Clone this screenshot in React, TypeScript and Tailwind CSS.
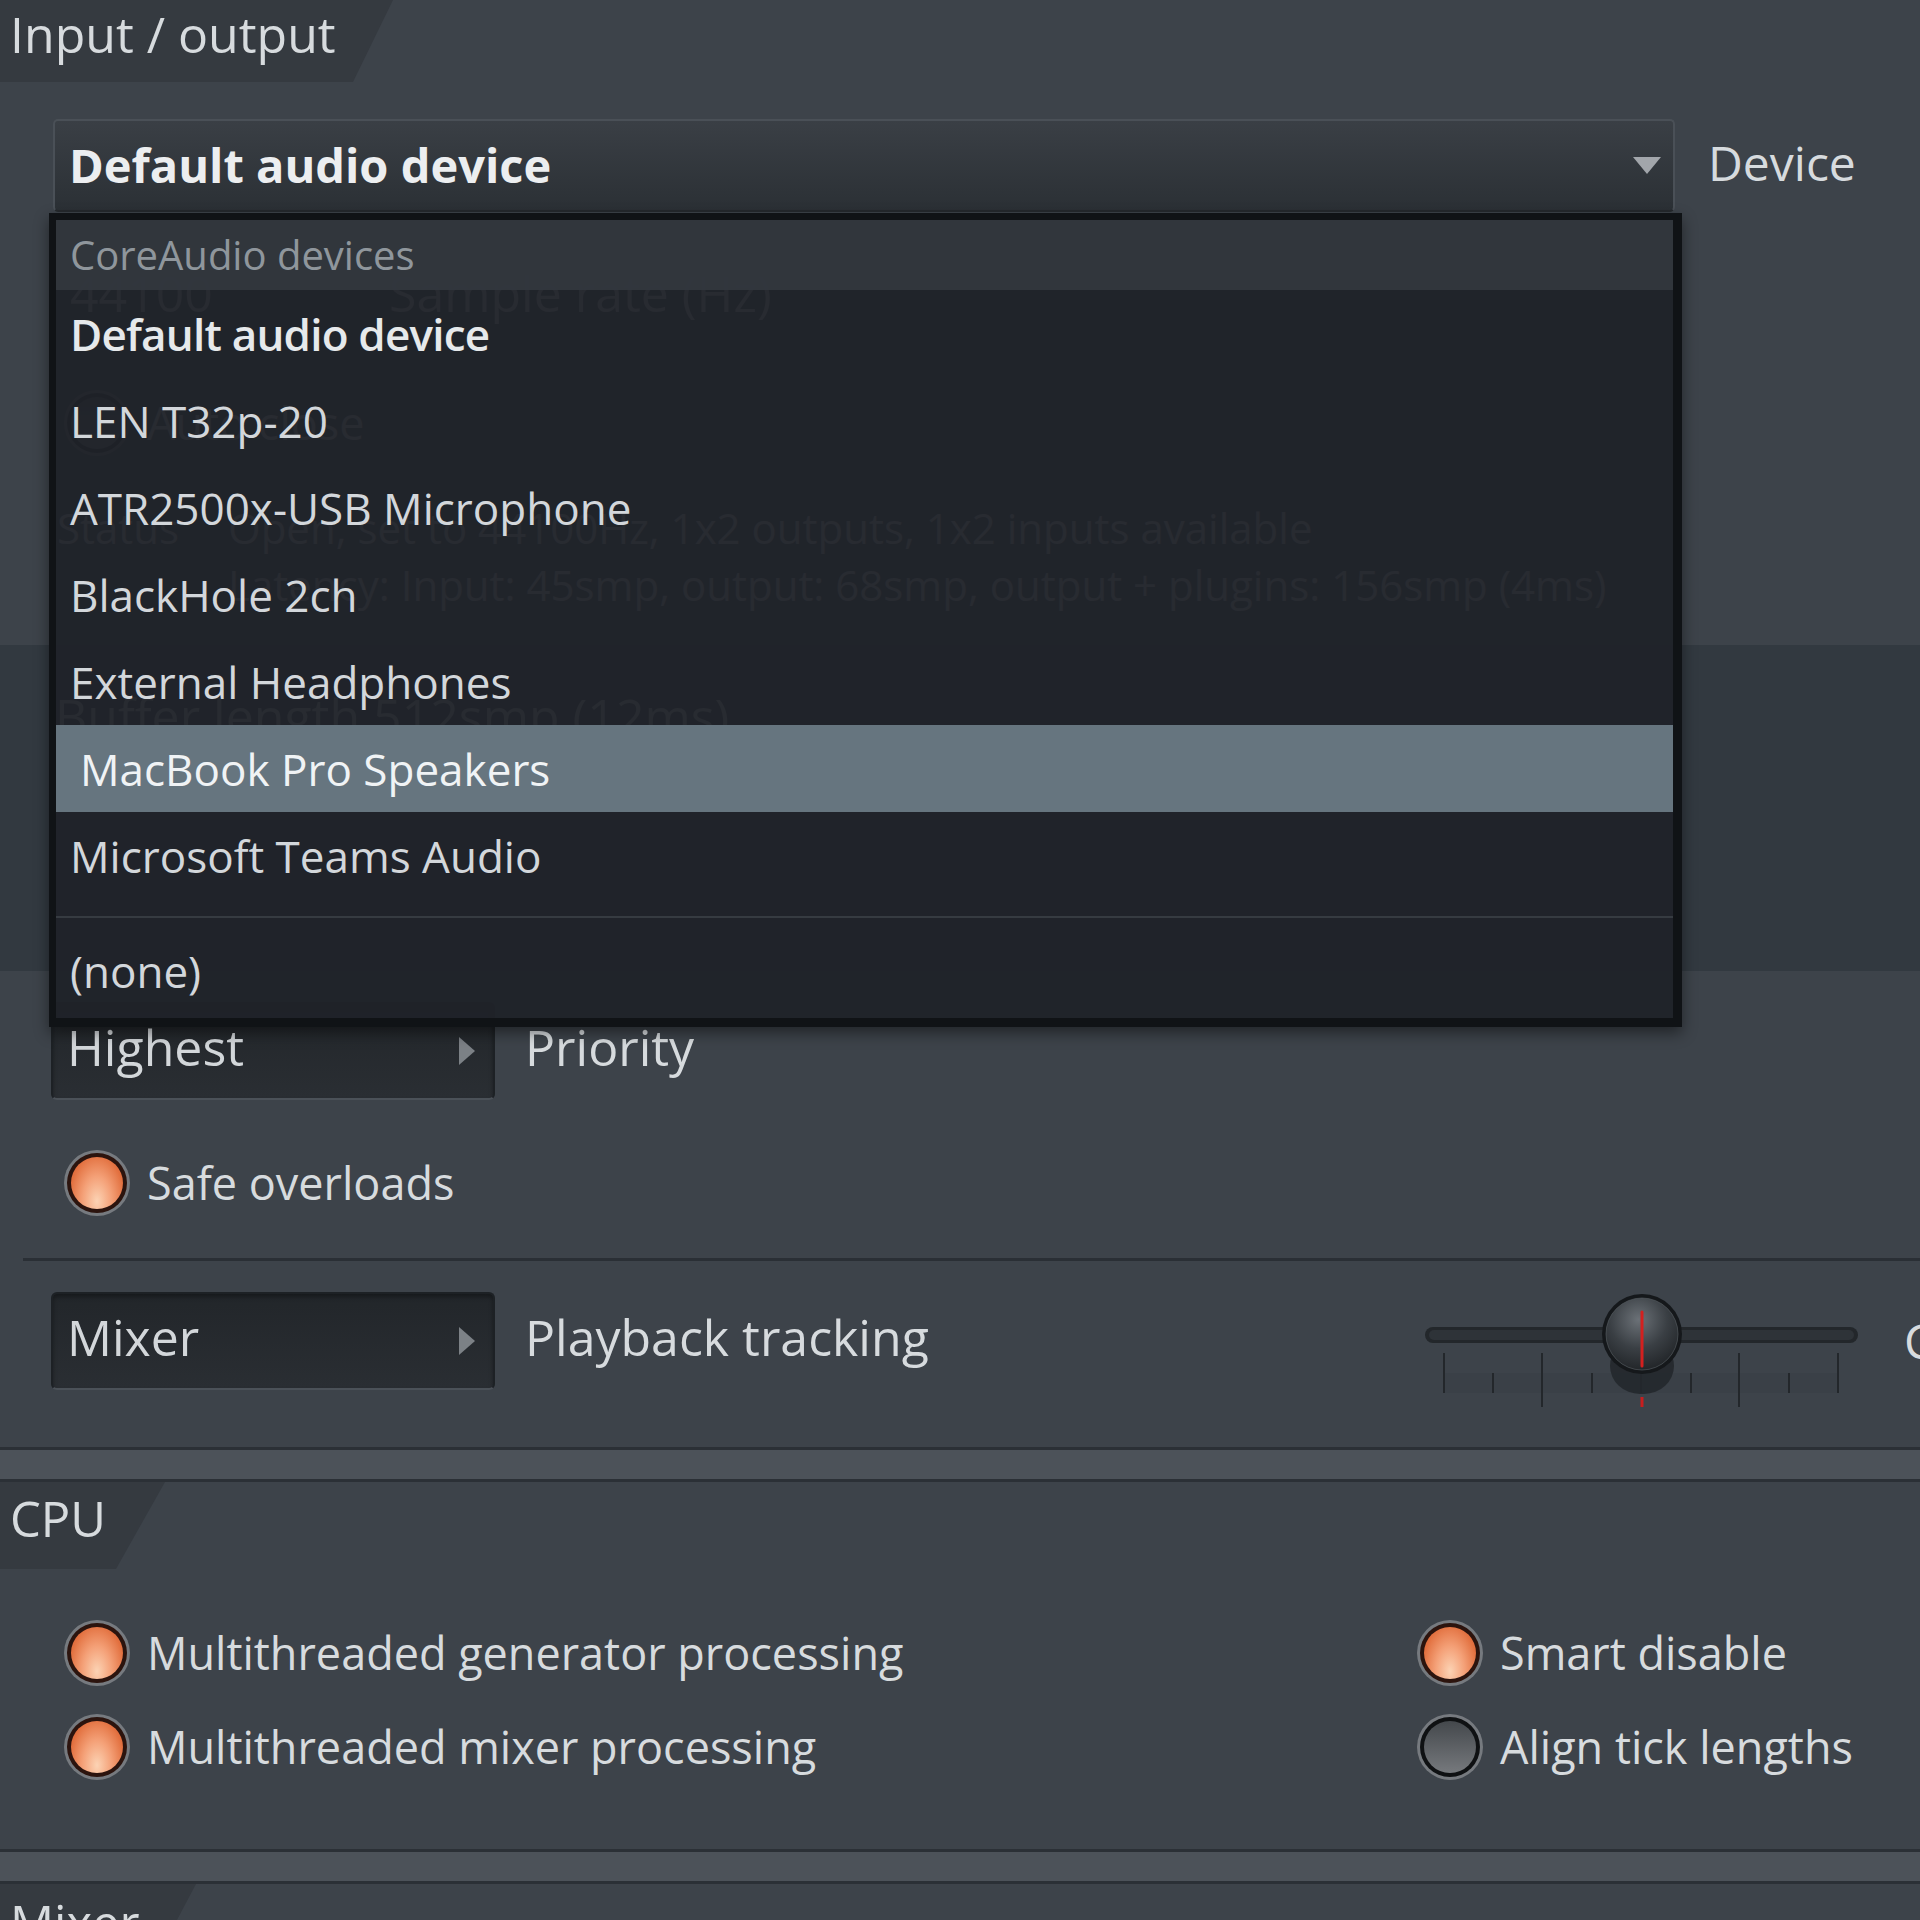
import React from "react";

type LedProps = { on: boolean };

// Round status lamp used for the toggle options
function Led({ on }: LedProps) {
  return (
    <span className="flex h-[66px] w-[66px] shrink-0 rounded-full bg-[#767a7f] p-[3px]">
      {on ? (
        <span className="flex h-full w-full rounded-full bg-[#2c140e] p-[4px]">
          <span className="h-full w-full rounded-full bg-[radial-gradient(ellipse_at_50%_85%,#fcd3b4_0%,#f4a077_40%,#e2703f_75%,#cf5a2f_100%)]" />
        </span>
      ) : (
        <span className="flex h-full w-full rounded-full bg-[#0f1113] p-[4px]">
          <span className="h-full w-full rounded-full bg-[linear-gradient(to_bottom,#44484c,#76797d)]" />
        </span>
      )}
    </span>
  );
}

function Toggle({ on, label }: { on: boolean; label: string }) {
  return (
    <div className="flex h-[68px] items-center gap-[17px]">
      <Led on={on} />
      <span className="whitespace-nowrap text-[45px]">{label}</span>
    </div>
  );
}

// Small stepper box with a right-pointing arrow
function Stepper({ label }: { label: string }) {
  return (
    <div className="flex h-[98px] w-[444px] shrink-0 items-center justify-between rounded-[6px] border-2 border-[#1d2125] border-b-[#4b5158] bg-[linear-gradient(to_bottom,#22262a,#2a2e33)] pl-[14px] pr-[18px] shadow-[inset_0_3px_4px_rgba(0,0,0,0.35)]">
      <span className="pb-[8px] text-[50px] text-[#d3d7da]">{label}</span>
      <svg width="16" height="28" viewBox="0 0 16 28">
        <path d="M0 0 L16 14 L0 28 Z" fill="#7c8186" />
      </svg>
    </div>
  );
}

function Divider() {
  return (
    <div>
      <div className="h-[3px] bg-[#2b3036]" />
      <div className="h-[29px] bg-[#4c5259]" />
      <div className="h-[3px] bg-[#2b3036]" />
    </div>
  );
}

// Horizontal tracking slider with knob and scale ticks
function TrackSlider() {
  const majors = [19, 117, 216, 314, 413];
  const minors = [68, 167, 266, 364];
  return (
    <svg width="440" height="120" viewBox="0 0 440 120" className="shrink-0 self-start">
      <defs>
        <radialGradient id="knobFace" cx="0.45" cy="0.3" r="0.8">
          <stop offset="0" stopColor="#6b7177" />
          <stop offset="0.5" stopColor="#3a3f44" />
          <stop offset="1" stopColor="#1b1e21" />
        </radialGradient>
      </defs>
      <rect x="0" y="35" width="433" height="16" rx="8" fill="#23272b" />
      <rect x="4" y="38" width="425" height="10" rx="5" fill="#2e3338" />
      <rect x="19" y="81" width="394" height="20" fill="#383e44" opacity="0.45" />
      {majors.map((x) => (
        <line
          key={"M" + x}
          x1={x}
          y1={61}
          x2={x}
          y2={x === 117 || x === 314 ? 115 : 101}
          stroke="#23272b"
          strokeWidth="2"
        />
      ))}
      {minors.map((x) => (
        <line key={"m" + x} x1={x} y1={81} x2={x} y2={101} stroke="#23272b" strokeWidth="2" />
      ))}
      <rect x="185" y="46" width="64" height="56" rx="30" fill="#24282c" opacity="0.9" />
      <circle cx="217" cy="42" r="40" fill="#15181b" />
      <circle cx="217" cy="42" r="36" fill="url(#knobFace)" />
      <circle cx="217" cy="42" r="36" fill="none" stroke="#5a6066" strokeWidth="1" opacity="0.6" />
      <line x1="217" y1="20" x2="217" y2="74" stroke="#d3201f" strokeWidth="3" strokeLinecap="round" />
      <line x1="217" y1="105" x2="217" y2="115" stroke="#c81e1e" strokeWidth="3" />
    </svg>
  );
}

const devices = [
  "LEN T32p-20",
  "ATR2500x-USB Microphone",
  "BlackHole 2ch",
  "External Headphones",
];

// Open device list shown over the panel
function DeviceMenu() {
  return (
    <div className="absolute left-[49px] top-[213px] w-[1633px] border-[7px] border-r-[9px] border-b-[9px] border-[#101316] bg-[#1f2329]/[0.955] shadow-[0_6px_14px_rgba(0,0,0,0.45)]">
      <div className="flex h-[70px] items-center bg-[#32373d]/[0.96] pl-[14px] text-[40px] text-[#8f969c]">
        CoreAudio devices
      </div>
      <div className="flex h-[87px] items-center pl-[14px] text-[44px] font-semibold tracking-[-0.8px] text-[#e6e9eb]">
        Default audio device
      </div>
      {devices.map((d) => (
        <div key={d} className="flex h-[87px] items-center pl-[14px] text-[44px] text-[#d3d7db]">
          {d}
        </div>
      ))}
      <div className="flex h-[87px] items-center bg-[#66757f] pl-[24px] text-[44px] text-[#f0f3f5]">
        MacBook Pro Speakers
      </div>
      <div className="flex h-[87px] items-center pl-[14px] text-[44px] text-[#d3d7db]">
        Microsoft Teams Audio
      </div>
      <div className="flex h-[36px] items-center">
        <div className="h-[2px] w-full bg-[#363b41]" />
      </div>
      <div className="flex h-[83px] items-center pb-[12px] pl-[14px] text-[44px] text-[#d3d7db]">(none)</div>
    </div>
  );
}

export default function App() {
  return (
    <div className="relative h-[1920px] w-[1920px] overflow-hidden bg-[#3d434a] text-[#d7dbde] [font-family:'Open_Sans','Noto_Sans',sans-serif]">
      {/* Input / output */}
      <div className="h-[82px] w-[393px] bg-[#353a40] pl-[10px] text-[50px] leading-[68px] [clip-path:polygon(0_0,393px_0,353px_100%,0_100%)]">
        Input / output
      </div>

      <div className="flex items-center pl-[53px] pt-[37px]">
        <div className="flex h-[93px] w-[1622px] shrink-0 items-center justify-between rounded-[5px] border-2 border-[#4a5057] border-b-[#25292d] bg-[linear-gradient(to_bottom,#3a3f45,#2b3035)] pl-[14px] pr-[12px]">
          <span className="text-[47px] font-bold text-[#eceef0]">Default audio device</span>
          <svg width="28" height="18" viewBox="0 0 28 18">
            <path d="M0 0 L28 0 L14 17 Z" fill="#a2a6ab" />
          </svg>
        </div>
        <span className="ml-[33px] pb-[6px] text-[48px]">Device</span>
      </div>

      <div className="mt-[40px] flex h-[82px] items-center text-[50px]">
        <span className="w-[389px] pl-[70px]">44100</span>
        <span>Sample rate (Hz)</span>
      </div>

      <div className="mt-[54px] flex h-[70px] items-center pl-[64px]">
        <Toggle on={false} label="Auto close" />
      </div>

      <div className="mt-[47px] flex h-[44px] items-center text-[42px]">
        <span className="w-[228px] pl-[57px]">Status</span>
        <span className="whitespace-nowrap">Open, set to 44100Hz, 1x2 outputs, 1x2 inputs available</span>
      </div>
      <div className="mt-[13px] flex h-[44px] items-center whitespace-nowrap pl-[228px] text-[42px]">
        Latency: Input: 45smp, output: 68smp, output + plugins: 156smp (4ms)
      </div>

      <div className="mt-[39px] h-[326px] bg-[#323940] pt-[49px]">
        <div className="flex h-[44px] items-center pl-[55px] text-[50px]">Buffer length 512smp (12ms)</div>
      </div>

      <div className="mt-[31px] flex h-[98px] items-center pl-[51px]">
        <Stepper label="Highest" />
        <span className="ml-[30px] pb-[8px] text-[50px]">Priority</span>
      </div>

      <div className="mt-[49px] flex pl-[64px]">
        <Toggle on={true} label="Safe overloads" />
      </div>

      <div className="ml-[23px] mt-[41px] h-[3px] bg-[#2a2f35]" />

      <div className="mt-[31px] flex h-[98px] items-center">
        <div className="flex w-[1425px] shrink-0 items-center pl-[51px]">
          <Stepper label="Mixer" />
          <span className="ml-[30px] pb-[8px] text-[50px]">Playback tracking</span>
        </div>
        <TrackSlider />
        <span className="ml-[39px] whitespace-nowrap text-[48px]">Center</span>
      </div>

      <div className="mt-[57px]">
        <Divider />
      </div>

      {/* CPU */}
      <div className="h-[87px] w-[165px] bg-[#353a40] pl-[10px] text-[49px] leading-[72px] [clip-path:polygon(0_0,165px_0,116px_100%,0_100%)]">
        CPU
      </div>

      <div className="mt-[50px] flex">
        <div className="w-[1417px] shrink-0 pl-[64px]">
          <Toggle on={true} label="Multithreaded generator processing" />
        </div>
        <Toggle on={true} label="Smart disable" />
      </div>
      <div className="mt-[26px] flex">
        <div className="w-[1417px] shrink-0 pl-[64px]">
          <Toggle on={true} label="Multithreaded mixer processing" />
        </div>
        <Toggle on={false} label="Align tick lengths" />
      </div>

      <div className="mt-[68px]">
        <Divider />
      </div>

      {/* Mixer */}
      <div className="h-[87px] w-[196px] bg-[#353a40] pl-[10px] text-[49px] leading-[76px] [clip-path:polygon(0_0,196px_0,150px_100%,0_100%)]">
        Mixer
      </div>

      <DeviceMenu />
    </div>
  );
}
